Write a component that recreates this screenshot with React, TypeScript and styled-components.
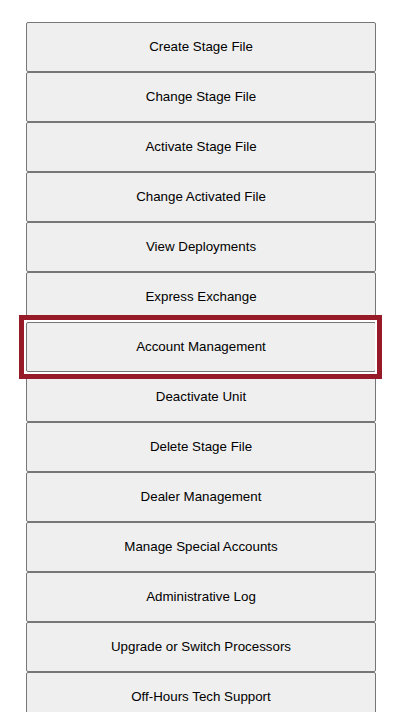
//react
import React from "react";

//styled-components
import styled, { createGlobalStyle } from "styled-components";

const GlobalStyle = createGlobalStyle`
  html,
  body {
    margin: 0;
    padding: 0;
    background-color: #ffffff;
  }
`;

//internal components
const Page = styled.div`
  padding: 22px 0 0 26px;
`;

const Menu = styled.div`
  width: 350px;

  display: flex;
  flex-direction: column;
`;

const Item = styled.div<{ $marked: boolean }>`
  position: relative;
  z-index: ${(props) => (props.$marked ? 1 : "auto")};

  //annotation frame round the marked entry
  &::after {
    content: "";
    display: ${(props) => (props.$marked ? "block" : "none")};
    position: absolute;
    top: -7px;
    left: -7px;
    right: -6px;
    bottom: -7px;

    border: 5px solid #961a28;
    box-shadow: inset 0 0 0 2px #ffffff;
    pointer-events: none;
  }
`;

const Button = styled.button`
  width: 350px;
  height: 50px;
  display: block;

  margin: 0;
  padding: 0 0 2px;

  color: #000000;
  background-color: #efefef;

  border: 1px solid #767676;
  border-radius: 2px;

  font-size: 13.333px;
  font-family: "Liberation Sans", Arial, sans-serif;

  cursor: pointer;
`;

const entries = [
  "Create Stage File",
  "Change Stage File",
  "Activate Stage File",
  "Change Activated File",
  "View Deployments",
  "Express Exchange",
  "Account Management",
  "Deactivate Unit",
  "Delete Stage File",
  "Dealer Management",
  "Manage Special Accounts",
  "Administrative Log",
  "Upgrade or Switch Processors",
  "Off-Hours Tech Support",
];

export default function App() {
  return (
    <Page>
      <GlobalStyle />
      <Menu>
        {entries.map((label) => (
          <Item key={label} $marked={label === "Account Management"}>
            <Button type="button">{label}</Button>
          </Item>
        ))}
      </Menu>
    </Page>
  );
}
